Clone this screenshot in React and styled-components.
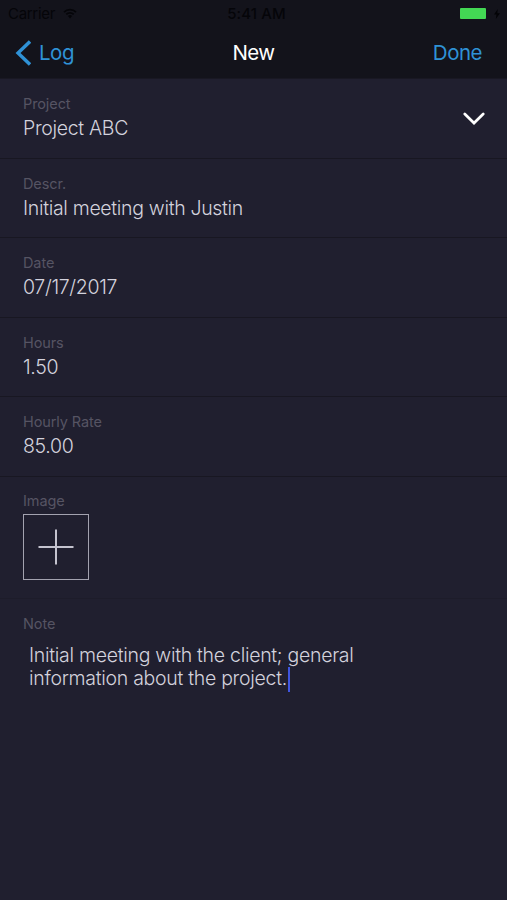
import React from "react";
import styled, { createGlobalStyle } from "styled-components";

const fields = [
    { label: "Project", value: "Project ABC", select: true },
    { label: "Descr.", value: "Initial meeting with Justin" },
    { label: "Date", value: "07/17/2017" },
    { label: "Hours", value: "1.50" },
    { label: "Hourly Rate", value: "85.00" }
];

const App = () => {
    return (
        <Screen>
            <GlobalStyle />
            <Header>
                <StatusBar>
                    <Carrier>
                        Carrier
                        <svg width="14" height="11" viewBox="0 0 14 11" fill="none" stroke="#050509" strokeWidth="1.7">
                            <path d="M1 4.1a8.5 8.5 0 0 1 12 0M3.3 6.4a5.2 5.2 0 0 1 7.4 0" />
                            <path d="M4.9 8.1a3 3 0 0 1 4.2 0L7 10.4z" fill="#050509" stroke="none" />
                        </svg>
                    </Carrier>
                    <Time>5:41 AM</Time>
                    <Power>
                        <Battery />
                        <svg width="6" height="10" viewBox="0 0 6 10" fill="#030306">
                            <path d="M3.8 0L0 5.6h2.5L1.8 10 6 4.2H3.3z" />
                        </svg>
                    </Power>
                </StatusBar>
                <NavBar>
                    <BackButton>
                        <svg width="16" height="26" viewBox="0 0 16 26" fill="none" stroke="#2f92d6" strokeWidth="3.4">
                            <path d="M15 1.5L3 13l12 11.5" />
                        </svg>
                        Log
                    </BackButton>
                    <Title>New</Title>
                    <DoneButton>Done</DoneButton>
                </NavBar>
            </Header>
            {fields.map(field => (
                <Row key={field.label}>
                    <div>
                        <Label>{field.label}</Label>
                        <Value>{field.value}</Value>
                    </div>
                    {field.select && (
                        <svg width="22" height="13" viewBox="0 0 22 13" fill="none" stroke="#fff" strokeWidth="2.7" strokeLinecap="round">
                            <path d="M1.8 2l9.2 9 9.2-9" />
                        </svg>
                    )}
                </Row>
            ))}
            <ImageRow>
                <Label>Image</Label>
                <AddImage>
                    <svg width="36" height="36" viewBox="0 0 36 36" stroke="#c4c3cf" strokeWidth="2">
                        <path d="M18 .5v35M.5 18h35" />
                    </svg>
                </AddImage>
            </ImageRow>
            <NoteRow>
                <Label>Note</Label>
                <Note>
                    Initial meeting with the client; general
                    <br />
                    information about the project.
                    <Caret />
                </Note>
            </NoteRow>
        </Screen>
    );
};

const GlobalStyle = createGlobalStyle`
    body {
        margin: 0;
        background-color: #201f2f;
    }
`;

const Screen = styled.div`
    box-sizing: border-box;
    width: 507px;
    height: 900px;
    overflow: hidden;
    background-color: #201f2f;
    font-family: Inter, "Liberation Sans", sans-serif;
    font-weight: 300;
    color: #d3d2dd;

    * {
        box-sizing: border-box;
    }

    svg {
        display: block;
        flex-shrink: 0;
    }
`;

const Header = styled.header`
    height: 79px;
    background-color: #13131b;
    border-bottom: 1px solid #191823;
`;

const StatusBar = styled.div`
    display: grid;
    grid-template-columns: 1fr auto 1fr;
    align-items: center;
    height: 27px;
    padding: 0 7px 0 8px;
    font-size: 15px;
    line-height: 27px;
    color: #050509;
`;

const Carrier = styled.div`
    display: flex;
    align-items: center;
    gap: 8px;
    font-weight: 400;
    letter-spacing: -0.3px;
`;

const Time = styled.div`
    padding-left: 5px;
    font-weight: 500;
    letter-spacing: 0.1px;
`;

const Power = styled.div`
    display: flex;
    align-items: center;
    justify-content: flex-end;
    gap: 8px;
`;

const Battery = styled.div`
    width: 26px;
    height: 11px;
    border-radius: 1px;
    background-color: #43d854;
`;

const NavBar = styled.div`
    display: grid;
    grid-template-columns: 1fr auto 1fr;
    align-items: center;
    height: 51px;
    padding: 0 25px 0 15px;
    font-size: 20.5px;
    font-weight: 400;
    letter-spacing: -0.6px;
`;

const NavButton = styled.button`
    display: flex;
    align-items: center;
    padding: 0;
    border: none;
    background: none;
    font: inherit;
    letter-spacing: -0.5px;
    color: #2f92d6;
`;

const BackButton = styled(NavButton)`
    justify-self: start;
    gap: 8px;
`;

const DoneButton = styled(NavButton)`
    justify-self: end;
`;

const Title = styled.div`
    padding-left: 10px;
    color: #fff;
`;

const Row = styled.div`
    display: flex;
    justify-content: space-between;
    align-items: center;
    height: 79.5px;
    padding: 0 22px 0 23px;
    border-bottom: 1px solid #181722;
`;

const Label = styled.div`
    font-size: 14.5px;
    line-height: 20px;
    font-weight: 400;
    letter-spacing: -0.1px;
    color: #565463;
`;

const Value = styled.div`
    font-size: 19.5px;
    line-height: 28px;
    letter-spacing: -0.32px;
`;

const ImageRow = styled.div`
    height: 122px;
    padding: 14px 23px 0;
    border-bottom: 1px solid #1d1c2a;
`;

const AddImage = styled.button`
    display: flex;
    align-items: center;
    justify-content: center;
    width: 66px;
    height: 66px;
    margin-top: 3px;
    padding: 0;
    border: 1px solid #a3a2af;
    background: none;
`;

const NoteRow = styled.div`
    padding: 15px 23px;
`;

const Note = styled.div`
    padding: 10px 6px;
    font-size: 19.5px;
    line-height: 23.3px;
    letter-spacing: -0.29px;
    white-space: nowrap;
`;

const Caret = styled.span`
    display: inline-block;
    width: 2px;
    height: 25px;
    margin: -8px 0 -5px 1px;
    vertical-align: -5px;
    background-color: #3f55e0;
    transform: translateY(-3px);
`;

export default App;
